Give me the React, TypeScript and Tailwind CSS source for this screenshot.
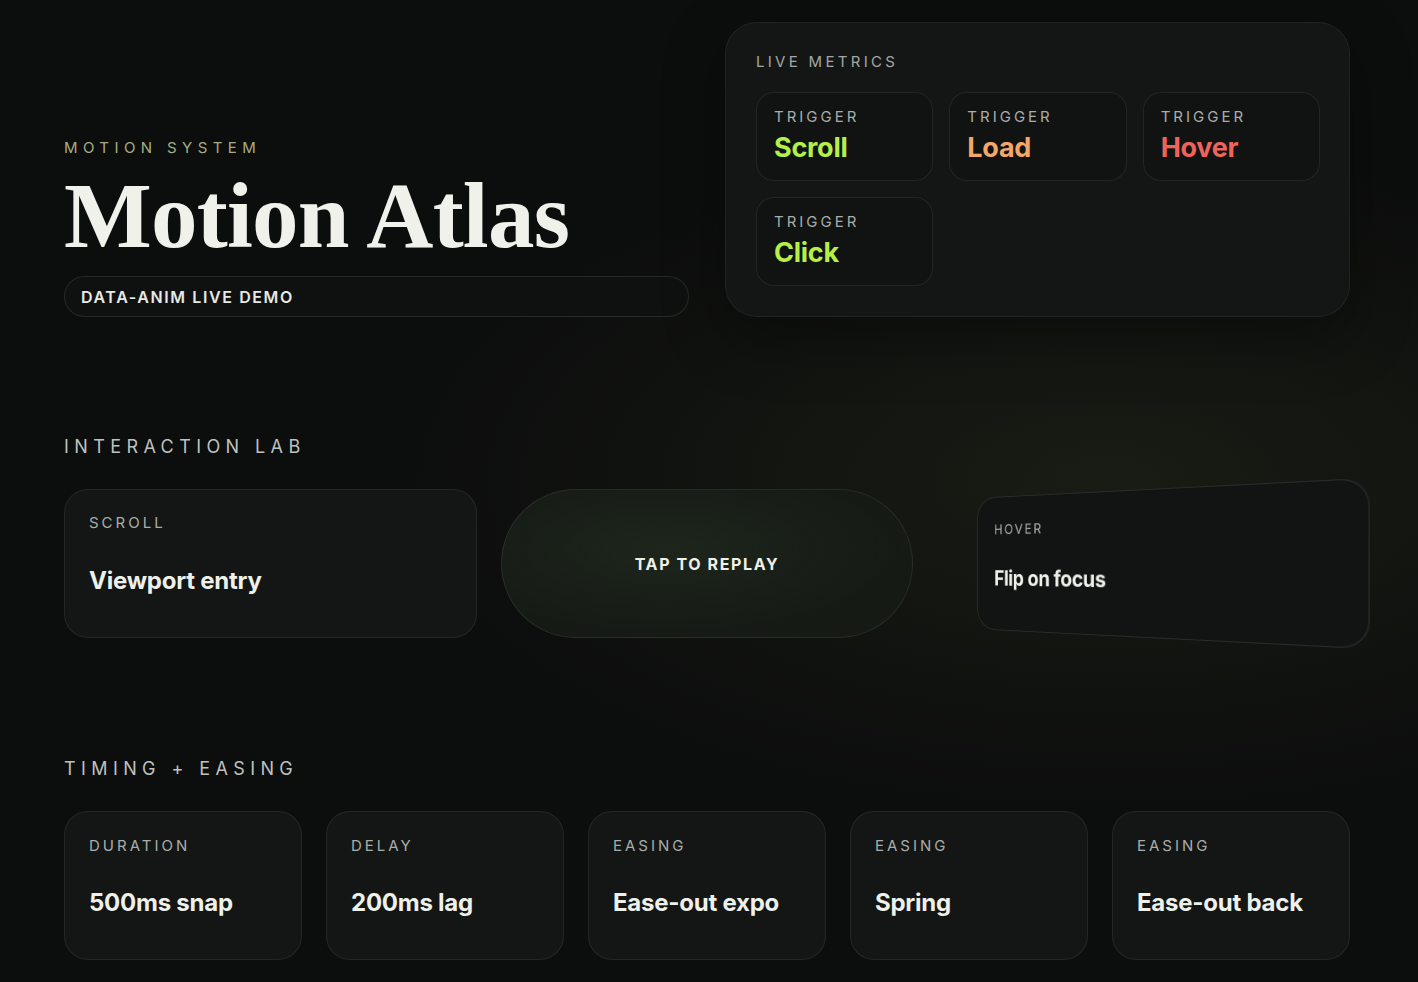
const metrics = [
  { label: "TRIGGER", value: "Scroll", color: "text-[#b4ef4a]" },
  { label: "TRIGGER", value: "Load", color: "text-[#f4a867]" },
  { label: "TRIGGER", value: "Hover", color: "text-[#ef645a]" },
  { label: "TRIGGER", value: "Click", color: "text-[#b4ef4a]" },
];

const timings = [
  { label: "DURATION", value: "500ms snap" },
  { label: "DELAY", value: "200ms lag" },
  { label: "EASING", value: "Ease-out expo" },
  { label: "EASING", value: "Spring" },
  { label: "EASING", value: "Ease-out back" },
];

export default function App() {
  return (
    <div
      className="min-h-screen bg-[#0c0d0d] bg-[radial-gradient(ellipse_at_78%_48%,rgba(58,68,38,0.28),transparent_45%)] text-[#eef0ea]"
      style={{ fontFamily: "Inter, 'Liberation Sans', sans-serif" }}
    >
      <main className="pl-16 pr-[68px] pt-[22px] pb-10">
        {/* Hero */}
        <section className="grid grid-cols-2 gap-9 items-end">
          <div>
            <p className="text-[15px] leading-5 tracking-[0.36em] text-[#a7ad83] mb-[11px]">
              MOTION SYSTEM
            </p>
            <h1
              className="text-[93px] leading-none font-bold tracking-[-0.008em] text-[#eff1ea]"
              style={{ fontFamily: "'Liberation Serif', serif" }}
            >
              Motion Atlas
            </h1>
            <div className="mt-[14px] h-[41px] rounded-full border border-white/10 bg-[#0f1111] flex items-center px-4">
              <span className="text-[16px] font-semibold tracking-[0.1em] text-[#e6e9e4]">
                DATA-ANIM LIVE DEMO
              </span>
            </div>
          </div>

          <div className="rounded-[32px] border border-white/[0.06] bg-[#141615] pl-[30px] pr-[29px] pt-[28px] pb-[30px] shadow-[0_20px_60px_rgba(0,0,0,0.35)]">
            <p className="text-[15px] leading-[22px] tracking-[0.22em] text-[#a3a7a4] mb-[19px]">LIVE METRICS</p>
            <div className="grid grid-cols-3 gap-4">
              {metrics.map((m) => (
                <div
                  key={m.value}
                  className="h-[89px] rounded-[18px] border border-white/[0.08] bg-[#111312] px-[17px] pt-[14px]"
                >
                  <p className="text-[15px] leading-5 tracking-[0.2em] text-[#a9adaa]">{m.label}</p>
                  <p className={`text-[27px] leading-8 font-bold tracking-[-0.01em] mt-[5px] ${m.color}`}>
                    {m.value}
                  </p>
                </div>
              ))}
            </div>
          </div>
        </section>

        {/* Interaction lab */}
        <section className="mt-[116px]">
          <h2 className="text-[18px] leading-7 tracking-[0.3em] text-[#bec2bf] mb-[28px]">
            INTERACTION LAB
          </h2>
          <div className="grid grid-cols-3 gap-6">
            <div className="h-[149px] rounded-[24px] border border-white/[0.07] bg-[#131615] px-6 pt-[23px]">
              <p className="text-[15px] leading-5 tracking-[0.2em] text-[#a9adaa]">SCROLL</p>
              <p className="mt-[34px] text-[24px] leading-7 font-bold tracking-[-0.01em]">Viewport entry</p>
            </div>

            <div className="h-[149px] rounded-full border border-white/[0.08] bg-[#151a15] bg-[radial-gradient(ellipse_at_40%_40%,rgba(40,52,36,0.45),transparent_70%)] flex items-center justify-center">
              <span className="text-[16px] font-bold tracking-[0.1em] text-[#eef0ea]">TAP TO REPLAY</span>
            </div>

            <div className="h-[149px] rounded-[24px] border border-white/[0.1] bg-[#121413] px-[22px] pt-[26px] [transform:perspective(560px)_rotateY(-21deg)] translate-x-[4px]">
              <p className="text-[15px] leading-5 tracking-[0.16em] text-[#a9adaa]">HOVER</p>
              <p className="mt-[30px] text-[23px] leading-7 font-bold tracking-[-0.02em]">Flip on focus</p>
            </div>
          </div>
        </section>

        {/* Timing + easing */}
        <section className="mt-[117px]">
          <h2 className="text-[18px] leading-7 tracking-[0.3em] text-[#bec2bf] mb-[28px]">
            TIMING + EASING
          </h2>
          <div className="grid grid-cols-5 gap-6">
            {timings.map((t) => (
              <div
                key={t.value}
                className="h-[149px] rounded-[24px] border border-white/[0.07] bg-[#131615] px-6 pt-[24px]"
              >
                <p className="text-[15px] leading-5 tracking-[0.2em] text-[#a9adaa]">{t.label}</p>
                <p className="mt-[33px] text-[24px] leading-7 font-bold tracking-[-0.01em]">{t.value}</p>
              </div>
            ))}
          </div>
        </section>
      </main>
    </div>
  );
}
